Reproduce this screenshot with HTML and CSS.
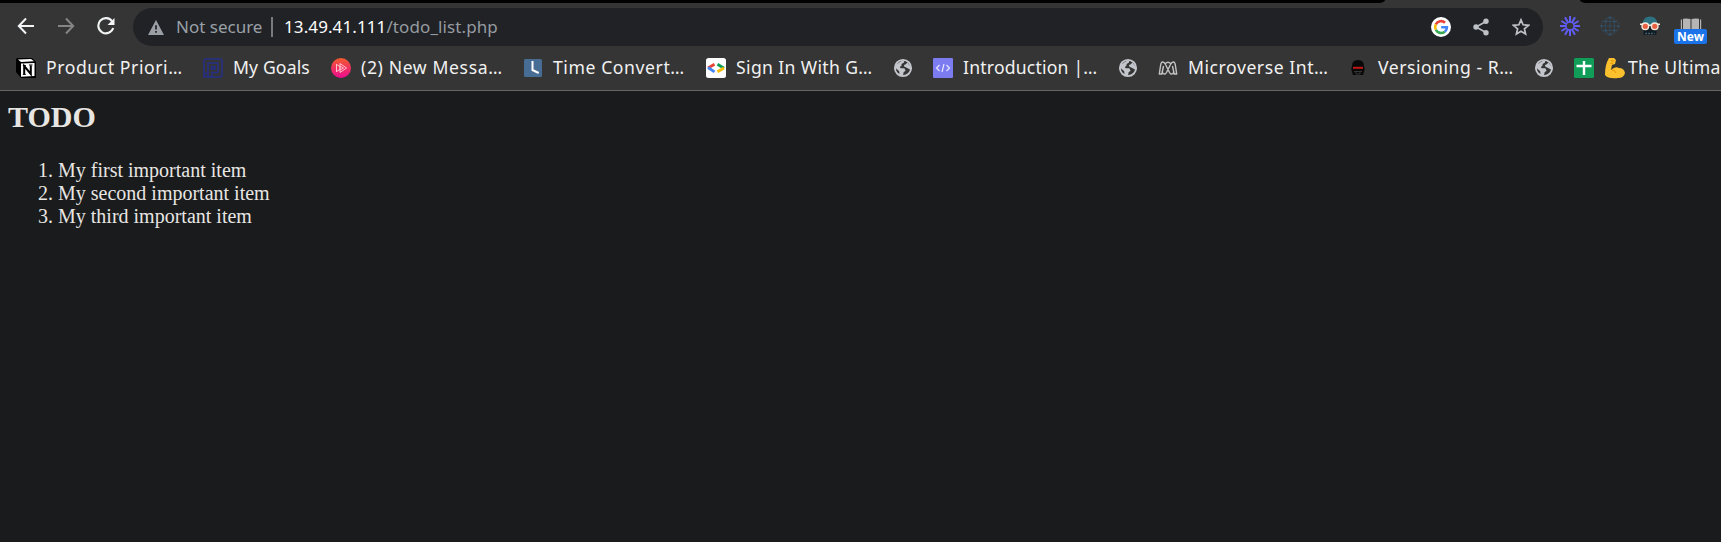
FILE: index.html
```
<!DOCTYPE html>
<html lang="en">
<head>
<meta charset="utf-8">
<title>TODO</title>
<link rel="stylesheet" href="styles.css">
</head>
<body>
<svg class="defs" width="0" height="0" aria-hidden="true">
  <symbol id="globe" viewBox="0 0 20 20">
    <circle cx="10" cy="10" r="8.1" fill="none" stroke="#c3c6cb" stroke-width="1.9"/>
    <path fill="#c3c6cb" d="M2 7.5 8 3.2 11.5 2 11 4.6 8.6 6 8.4 8 6.8 8.8 7.6 10.2 11.4 10.2 12.6 12.8 10.6 14.2 10 18 6.5 17 6.2 13.2 2 9.5ZM12.8 6.2 14.4 4.5 17.8 9 17 11.5 14.6 10.2 11.2 8.6 11 7Z"/>
  </symbol>
</svg>
<header class="browser">
  <div class="tabs"><span class="tab-dark left"></span><span class="tab-dark right"></span></div>
  <div class="toolbar">
    <nav class="nav">
      <svg width="18" height="18" viewBox="0 0 18 18" fill="none" stroke="#f1f3f4" stroke-width="2"><path d="M17 9H2M9 1.5 1.8 9 9 16.5"/></svg>
      <svg width="18" height="18" viewBox="0 0 18 18" fill="none" stroke="#858585" stroke-width="2"><path d="M1 9h15M9 1.5 16.2 9 9 16.5"/></svg>
      <svg width="18" height="18" viewBox="0 0 18 18"><path fill="none" stroke="#f1f3f4" stroke-width="2.1" d="M15.2 4.4A7.6 7.6 0 1 0 16.2 11"/><path fill="#f1f3f4" d="M17.5 1v7h-7Z"/></svg>
    </nav>
    <div class="omnibox">
      <svg class="warning" width="16" height="15" viewBox="0 0 16 15"><path fill="#9aa0a6" d="M8 0 16 15H0Z"/><path stroke="#202124" stroke-width="1.7" d="M8 5.3v4.2M8 11v1.8"/></svg>
      <span class="secure">Not secure</span>
      <span class="divider"></span>
      <span class="url"><span class="host">13.49.41.111</span><span class="path">/todo_list.php</span></span>
      <div class="actions">
        <svg width="20" height="20" viewBox="0 0 20 20"><circle cx="10" cy="10" r="10" fill="#fff"/><g fill="none" stroke-width="2.6"><path stroke="#ea4335" d="M4.8 7.3A5.9 5.9 0 0 1 14 5.7"/><path stroke="#fbbc05" d="M4.8 7.3a6 6 0 0 0 0 5.4"/><path stroke="#34a853" d="M4.8 12.7a5.9 5.9 0 0 0 9 2"/><path stroke="#4285f4" d="M10.2 10.2h5.7a5.8 5.8 0 0 1-2.1 4.5"/></g></svg>
        <svg width="16" height="18" viewBox="0 0 16 18"><path fill="none" stroke="#bdc1c6" stroke-width="1.6" d="M13 3.5 3 9l10 5.5"/><g fill="#bdc1c6"><circle cx="13" cy="3.2" r="2.7"/><circle cx="3" cy="9" r="2.7"/><circle cx="13" cy="14.8" r="2.7"/></g></svg>
        <svg width="18" height="18" viewBox="0 0 18 18"><path fill="none" stroke="#bdc1c6" stroke-width="1.7" d="m9 1.8 2.1 5 5.4.5-4.1 3.5 1.2 5.3L9 13.3l-4.6 2.8 1.2-5.3-4.1-3.5 5.4-.5Z"/></svg>
      </div>
    </div>
    <div class="extensions">
      <svg width="20" height="20" viewBox="0 0 20 20"><g stroke="#625df5" stroke-width="2"><path d="M10 0v20M0 10h20M5 1.35l10 17.3M1.35 5l17.3 10M1.35 15l17.3-10M5 18.65l10-17.3"/></g><circle cx="10" cy="10" r="4.6" fill="#625df5"/><circle cx="10" cy="10" r="3.3" fill="#353535"/></svg>
      <svg width="20" height="20" viewBox="0 0 20 20"><g fill="none" stroke="#344c61" stroke-width=".8"><circle cx="10" cy="10" r="8.8" stroke-dasharray="2 1"/><ellipse cx="10" cy="10" rx="4.5" ry="8.8"/><path d="M10 1v18M1 10h18M2.5 5.5h15M2.5 14.5h15"/></g><g fill="#345776"><circle cx="10" cy="1.5" r="1"/><circle cx="10" cy="18.5" r="1"/><circle cx="1.5" cy="10" r="1"/><circle cx="18.5" cy="10" r="1"/><circle cx="5.5" cy="5.5" r="1"/><circle cx="14.5" cy="5.5" r="1"/><circle cx="5.5" cy="14.5" r="1"/><circle cx="14.5" cy="14.5" r="1"/></g></svg>
      <svg width="20" height="20" viewBox="0 0 20 20"><path fill="#2e7181" d="M2.5 9C2.5 4 5 .5 10 .5S17.500 4 17.500 9Z"/><path fill="#111c24" d="M3.500 10.500h13V19h-13Z"/><path stroke="#53717c" stroke-width="1.400" stroke-dasharray="1.500 1.300" d="M5.500 17.500h9"/><g fill="#e96143" stroke="#f5e9dc" stroke-width="1.400"><circle cx="5.300" cy="10.300" r="3.300"/><circle cx="14.700" cy="10.300" r="3.300"/></g><path stroke="#f5e9dc" stroke-width="1.600" d="M0 8.200h3M17 8.200h3M8 9.200h4"/></svg>
      <div class="reader">
        <svg width="22" height="11" viewBox="0 0 22 11"><path fill="#b5b5b5" d="M3 .8Q7 0 10.500 1v10H3ZM11.500 1Q15 0 19 .8V11h-7.500ZM.8 1.500h1.200V11H.8ZM20 1.500h1.200V11H20Z"/></svg>
        <span class="new">New</span>
      </div>
    </div>
  </div>
  <div class="bookmarks">
    <div class="bookmark b1"><svg width="20" height="20" viewBox="0 0 20 20"><path fill="#000" d="M1 0 16 0 20 4v16H5L0 14V1Z"/><path fill="#fff" d="M2 1.500 15 1l3 2.300L5 4ZM5 5.500 18.500 5v13L5 18.700Z"/><path fill="none" stroke="#000" stroke-width="2" d="M8.200 16V8l6.600 8V7.500"/><path stroke="#000" d="M6.800 7.500h3M13 7h3.500M6.800 16.400h3"/></svg><span>Product Priori…</span></div>
    <div class="bookmark b2"><svg width="20" height="20" viewBox="0 0 20 20"><g fill="none" stroke="#262f88" stroke-width="1.500"><path d="M5 19h12q2 0 2-2V3q0-2-2-2H3Q1 1 1 3v12.500h4V5h10v9.500H9V19M8.500 12V8.500H12V11H8.500M1 15.500V19h4v-3.500"/></g></svg><span>My Goals</span></div>
    <div class="bookmark b3"><svg width="20" height="20" viewBox="0 0 20 20"><defs><linearGradient id="pink" x2="0" y2="1"><stop stop-color="#f35b2d"/><stop offset="1" stop-color="#ec0b91"/></linearGradient></defs><circle cx="10" cy="10" r="10" fill="url(#pink)"/><path fill="none" stroke="#ffc2cc" stroke-width="1" d="M5.500 6v8M5.500 6.500 9 8.500v3L5.500 13.500M9 5.500v9l6.500-4.500ZM9 8l3.500 2L9 12"/></svg><span>(2) New Messa…</span></div>
    <div class="bookmark b4"><svg width="18" height="18" viewBox="0 0 18 18"><rect width="18" height="18" rx="1.500" fill="#486d94"/><path fill="none" stroke="#fff" stroke-width="2" d="M8.500 2v9l6.200 3"/></svg><span>Time Convert…</span></div>
    <div class="bookmark b5"><svg width="20" height="20" viewBox="0 0 20 20"><rect width="20" height="20" rx="2.500" fill="#fff"/><g fill="none" stroke-width="2.800"><path stroke="#ea4335" d="M8.500 6.200 2 10"/><path stroke="#4285f4" d="m2 9.500 6.500 4.300"/><path stroke="#0f9d58" d="m11.500 6.200 6.500 4"/><path stroke="#fbbc05" d="m18 10-6.500 3.800"/></g></svg><span>Sign In With G…</span></div>
    <div class="bookmark b6"><svg width="20" height="20"><use href="#globe"/></svg></div>
    <div class="bookmark b7"><svg width="20" height="20" viewBox="0 0 20 20"><rect width="20" height="20" rx="1" fill="#7c7cf0"/><path fill="none" stroke="#e5e5ff" stroke-width="1.200" d="M6.500 7 3.500 10l3 3M13.500 7l3 3-3 3M11 6 9 14"/></svg><span>Introduction |…</span></div>
    <div class="bookmark b8"><svg width="20" height="20"><use href="#globe"/></svg></div>
    <div class="bookmark b9"><svg width="20" height="20" viewBox="0 0 20 20"><g fill="none" stroke="#c4c4c4" stroke-width="1.400" stroke-linejoin="round"><path d="M4.500 4q2 0 3 2.500l4 8q1.500 2.500 3.500 1l1-2M15.500 4q-2 0-3 2.500l-4 8q-1.500 2.500-3.500 1l-1-2M4.500 4Q3 4 2.500 8L1.300 16h2.500L5.500 8M15.500 4q1.500 0 2 4l1.200 8h-2.500L14.500 8M7.500 5.500Q10 3 12.500 5.500"/></g></svg><span>Microverse Int…</span></div>
    <div class="bookmark b10"><svg width="20" height="20" viewBox="0 0 20 20"><path fill="#090909" d="M4 8q0-6 6-6t6 6l.7 3-1.500 6H4.800l-1.500-6Z"/><path fill="#c51616" d="M5 8.800h10v2H5Z"/><path fill="none" stroke="#373737" d="M6 13.500h8M8 13.500V16h4v-2.500"/></svg><span>Versioning - R…</span></div>
    <div class="bookmark b11"><svg width="20" height="20"><use href="#globe"/></svg></div>
    <div class="bookmark b12"><svg width="20" height="20" viewBox="0 0 20 20"><rect width="20" height="20" rx="1.500" fill="#0f9d58"/><path stroke="#fff" stroke-width="2.400" d="M10 3v14M2.500 8h15"/></svg><svg class="arm" width="22" height="22" viewBox="0 0 22 22"><path fill="#fbc02d" d="M5 1h5l2 2-1 4-3 1-1 5q4-4 8-2 5 0 6 5-1 5-7 5Q4 22 1 18C1 11 2 6 5 1Z"/><path fill="none" stroke="#e59600" d="M7 3.500 10 4M6.500 6.500 9 6M8 13q3 0 4 3"/></svg><span>The Ultima</span></div>
  </div>
</header>
<main class="page">
  <h1>TODO</h1>
  <ol><li>My first important item</li><li>My second important item</li><li>My third important item</li></ol>
</main>
</body>
</html>
```
FILE: styles.css
```
* { box-sizing: border-box; }
html, body { height: 100%; margin: 0; overflow: hidden; }
body { display: flex; flex-direction: column; background: #191b1c; }
svg { display: block; flex: none; }
.defs { position: absolute; }
.browser { flex: none; height: 91px; background: #353535; border-bottom: 1px solid #666; font-family: "Noto Sans", sans-serif; color: #f1f1f1; }
.tabs { display: flex; justify-content: space-between; height: 3px; }
.tab-dark { background: #000; }
.left { width: 1385px; border-bottom-right-radius: 6px 3px; }
.right { width: 141px; border-bottom-left-radius: 6px 3px; }
.toolbar { display: flex; height: 48px; padding: 5px 0 0 17px; }
.nav { display: flex; gap: 22px; width: 116px; padding-top: 9px; }
.omnibox { display: flex; align-items: center; width: 1410px; height: 38px; padding: 0 13px 0 15px; border-radius: 19px; background: #202226; font-size: 17px; line-height: 38px; white-space: nowrap; }
.warning { margin-right: 12px; }
.secure { width: 95px; color: #9aa0a6; }
.divider { width: 2px; height: 20px; margin-right: 11px; background: #777a7e; }
.url { letter-spacing: .1px; }
.host { color: #fff; }
.path { color: #969ba0; }
.actions { display: flex; align-items: center; gap: 22px; margin-left: auto; }
.actions svg:nth-child(2) { margin-right: 1px; }
.extensions { display: flex; gap: 20px; padding: 8px 0 0 17px; }
.reader { display: flex; flex-direction: column; align-items: center; width: 33px; margin-left: -6px; padding-top: 2px; }
.new { width: 33px; height: 15px; border-radius: 2px; background: #1a73e8; color: #fff; font-size: 12px; line-height: 15px; font-weight: 700; text-align: center; }
.bookmarks { display: flex; height: 39px; padding-left: 16px; overflow: hidden; }
.bookmark { display: flex; align-items: center; flex: none; height: 33px; gap: 10px; font-size: 17.6px; line-height: 33px; white-space: nowrap; }
.b1 { width: 187px; letter-spacing: .57px; }
.b2 { width: 128px; letter-spacing: .14px; }
.b3 { width: 193px; letter-spacing: .62px; }
.b4 { width: 182px; gap: 11px; letter-spacing: .58px; }
.b5 { width: 187px; letter-spacing: .35px; }
.b6 { width: 40px; }
.b7 { width: 185px; letter-spacing: .2px; }
.b8 { width: 40px; }
.b9 { width: 190px; letter-spacing: .55px; }
.b10 { width: 186px; letter-spacing: .52px; }
.b11 { width: 40px; }
.b12 { letter-spacing: .3px; }
.arm { margin-right: -8px; }
.page { padding: 9px 8px; color: #e8e6e3; font-family: "Liberation Serif", serif; font-size: 20px; line-height: 23px; }
.page h1 { margin: 0; font-size: 30px; line-height: 34px; }
.page ol { margin: 25px 0 0; padding-left: 50px; }
```
